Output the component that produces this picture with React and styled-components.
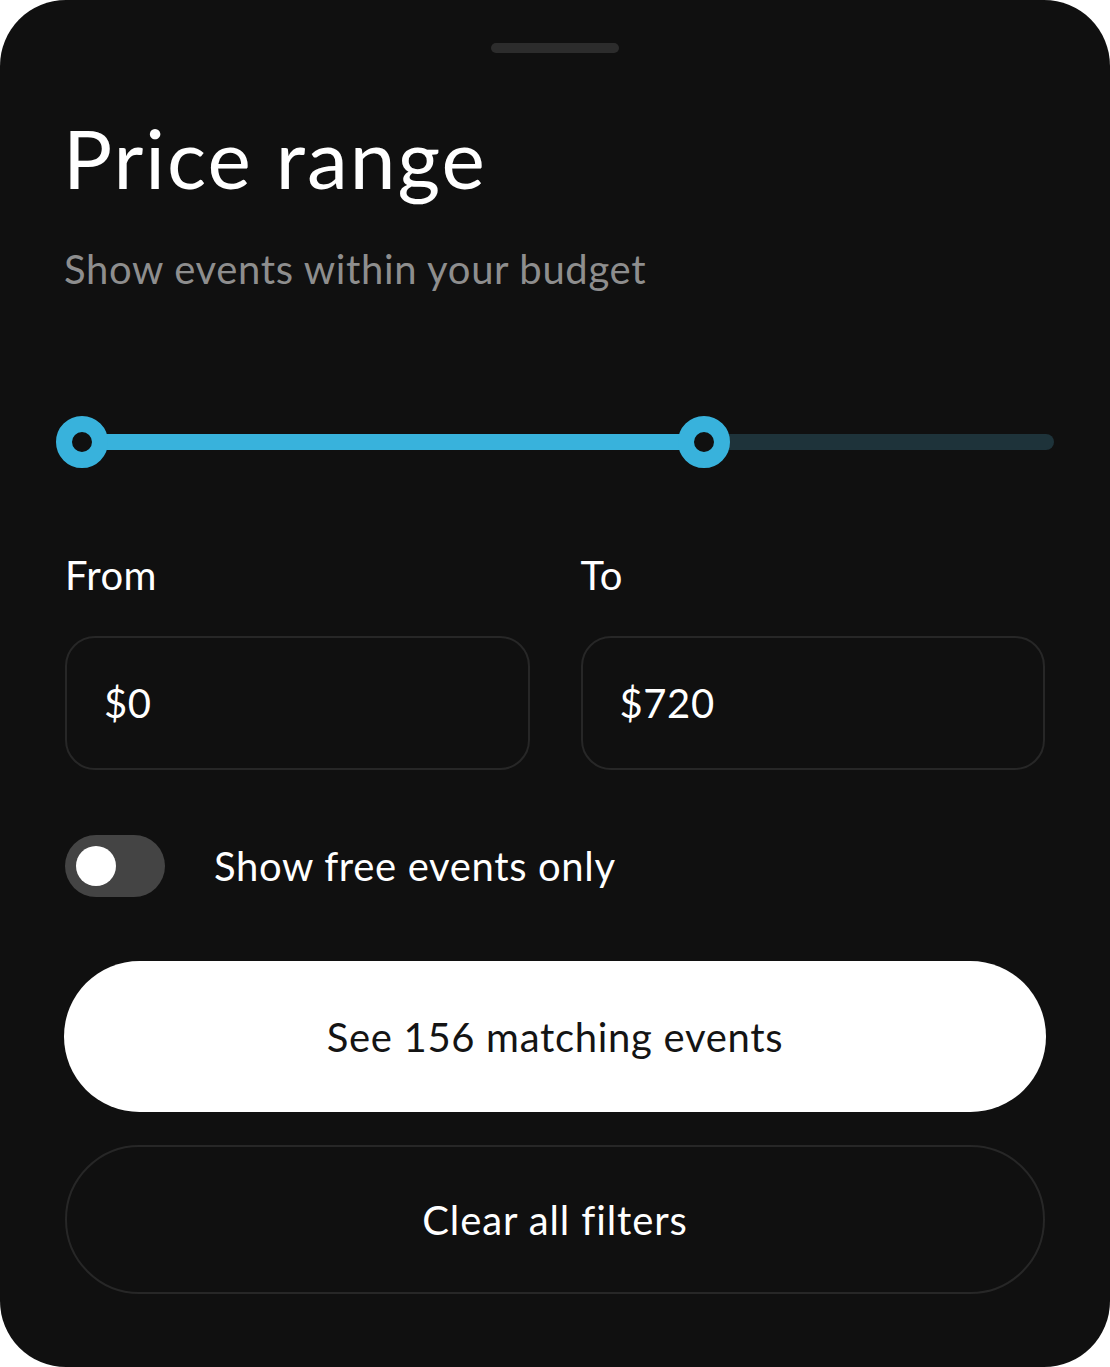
import styled, { createGlobalStyle } from "styled-components";

const GlobalStyle = createGlobalStyle`
    html, body {
        margin: 0;
        padding: 0;
        background: #ffffff;
    }
    * {
        box-sizing: border-box;
    }
`;

const Sheet = styled.div`
    width: 1110px;
    height: 1367px;
    background: #101010;
    border-radius: 66px;
    padding: 43px 65px 0;
    display: flex;
    flex-direction: column;
    font-family: Lato, "Noto Sans", sans-serif;
    color: #ffffff;
    overflow: hidden;
`;

const Handle = styled.div`
    width: 128px;
    height: 10px;
    border-radius: 5px;
    background: #2c2c2c;
    align-self: center;
`;

const Title = styled.h1`
    margin: 63px 0 0 -2px;
    font-size: 82px;
    line-height: 82px;
    font-weight: 400;
    letter-spacing: 2px;
`;

const Subtitle = styled.p`
    margin: 51px 0 0 -1px;
    font-size: 40px;
    line-height: 40px;
    color: #8e8e8e;
    letter-spacing: 0.65px;
`;

const Slider = styled.div`
    position: relative;
    height: 52px;
    margin: 127px -9px 0;
`;

const Track = styled.div`
    position: absolute;
    left: 26px;
    right: 0;
    top: 18px;
    height: 16px;
    border-radius: 8px;
    background: #1e333a;
`;

const Fill = styled.div`
    position: absolute;
    left: 26px;
    top: 18px;
    height: 16px;
    background: #38b2dc;
`;

const Thumb = styled.div`
    position: absolute;
    top: 0;
    width: 52px;
    height: 52px;
    border-radius: 50%;
    border: 16px solid #38b2dc;
    background: #101010;
`;

const Fields = styled.div`
    display: grid;
    grid-template-columns: 1fr 1fr;
    column-gap: 51px;
    margin-top: 87px;
`;

const Field = styled.div`
    display: flex;
    flex-direction: column;
`;

const Label = styled.label`
    font-size: 40px;
    line-height: 40px;
    letter-spacing: 0.4px;
`;

const InputBox = styled.div`
    margin-top: 41px;
    height: 134px;
    border: 2px solid #272727;
    border-radius: 30px;
    display: flex;
    align-items: center;
    padding-left: 37px;
    font-size: 40px;
    letter-spacing: 0.6px;
`;

const ToggleRow = styled.div`
    display: flex;
    align-items: center;
    gap: 49px;
    margin-top: 65px;
`;

const Toggle = styled.div`
    width: 100px;
    height: 62px;
    border-radius: 31px;
    background: #444444;
    display: flex;
    align-items: center;
    padding-left: 11px;
`;

const Knob = styled.div`
    width: 40px;
    height: 40px;
    border-radius: 50%;
    background: #ffffff;
`;

const ToggleText = styled.span`
    font-size: 40px;
    letter-spacing: 0.65px;
`;

const Button = styled.button`
    height: ${(props) => props.primary ? '151px' : '149px'};
    margin: ${(props) => props.primary ? '64px -1px 0' : '33px 0 0'};
    border-radius: 76px;
    border: ${(props) => props.primary ? 'none' : '2px solid #272727'};
    background: ${(props) => props.primary ? '#ffffff' : 'transparent'};
    color: ${(props) => props.primary ? '#141414' : '#ffffff'};
    font-family: Lato, "Noto Sans", sans-serif;
    font-size: 40px;
    letter-spacing: ${(props) => props.primary ? '0.7px' : '0.9px'};
    cursor: pointer;
`;

const min = 0;
const max = 1095;
const low = 0;
const high = 720;

const App = () => {
    const span = 946;
    const lowX = ((low - min) / (max - min)) * span;
    const highX = ((high - min) / (max - min)) * span;
    return (
        <>
            <GlobalStyle />
            <Sheet>
                <Handle />
                <Title>Price range</Title>
                <Subtitle>Show events within your budget</Subtitle>
                <Slider>
                    <Track />
                    <Fill style={{ left: 26 + lowX, width: highX - lowX }} />
                    <Thumb style={{ left: lowX }} />
                    <Thumb style={{ left: highX }} />
                </Slider>
                <Fields>
                    <Field>
                        <Label>From</Label>
                        <InputBox>$0</InputBox>
                    </Field>
                    <Field>
                        <Label>To</Label>
                        <InputBox>$720</InputBox>
                    </Field>
                </Fields>
                <ToggleRow>
                    <Toggle>
                        <Knob />
                    </Toggle>
                    <ToggleText>Show free events only</ToggleText>
                </ToggleRow>
                <Button primary>See 156 matching events</Button>
                <Button>Clear all filters</Button>
            </Sheet>
        </>
    );
};

export default App;
